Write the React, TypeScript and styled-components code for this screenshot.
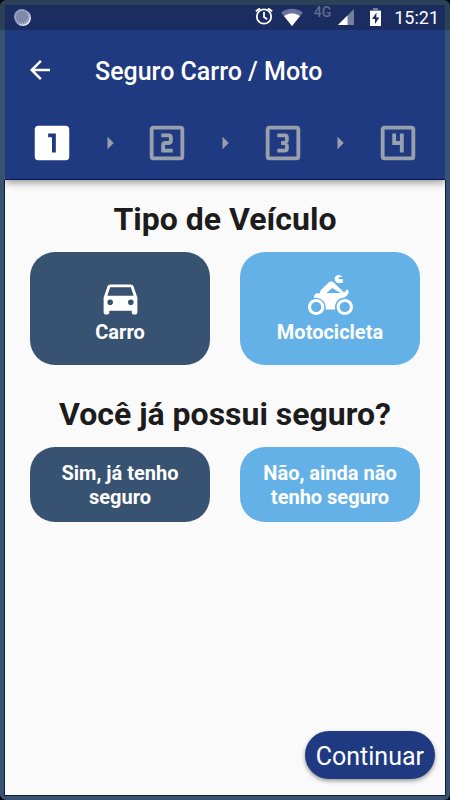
import React, { useState } from 'react';
import styled, { createGlobalStyle } from 'styled-components';

const navy = '#203a82';
const slate = '#385272';
const sky = '#64b1e8';

const GlobalStyle = createGlobalStyle`
  *, *::before, *::after { box-sizing: border-box; }
  body { margin: 0; background: #000; font-family: Roboto, sans-serif; }
  button { font-family: inherit; border: 0; cursor: pointer; padding: 0; }
  svg { display: block; flex: none; }
`;

const Frame = styled.div`
  min-height: 100vh;
  display: flex;
  flex-direction: column;
  padding: 5px;
  border-radius: 6px;
  background: linear-gradient(#2b4158 30px, ${slate} 30px);
`;

const Screen = styled.div`
  flex: 1;
  display: flex;
  flex-direction: column;
  background: #fafafa;
`;

const StatusBar = styled.div`
  height: 25px;
  display: flex;
  align-items: center;
  justify-content: space-between;
  padding: 0 6px 0 8px;
  background: #1b2c60;
  color: #fff;
`;

const StatusGroup = styled.div`
  display: flex;
  align-items: center;
`;

const StatusIcon = styled.svg<{ $gap: number }>`
  margin-right: ${p => p.$gap}px;
`;

const Network = styled.span`
  align-self: flex-start;
  margin-right: 7px;
  color: #5f6b90;
  font-size: 14px;
  font-weight: 500;
  line-height: 12px;
`;

const Clock = styled.time`
  font-size: 18px;
  line-height: 24px;
`;

const Header = styled.header`
  height: 150px;
  background: ${navy};
  border-bottom: 1px solid #0c1552;
  box-shadow: 0 2px 8px rgba(0, 0, 0, 0.45);
  clip-path: inset(0 0 -16px 0);
`;

const TitleRow = styled.div`
  height: 80px;
  display: flex;
  align-items: center;
  gap: 40px;
  padding-left: 20px;
`;

const BackButton = styled.button`
  width: 30px;
  height: 30px;
  background: none;
`;

const Title = styled.h1`
  margin: 0;
  padding-top: 3px;
  color: #fff;
  font-size: 25px;
  font-weight: 500;
  line-height: 30px;
`;

const Steps = styled.ol`
  height: 66px;
  display: flex;
  align-items: center;
  justify-content: space-between;
  margin: 0;
  padding: 0 24px;
  list-style: none;
`;

const Step = styled.li<{ $active?: boolean }>`
  color: ${p => (p.$active ? '#fff' : '#98a0ac')};
`;

const Content = styled.main`
  flex: 1;
  display: flex;
  flex-direction: column;
  padding: 20px 10px 16px 25px;
  box-shadow: 0 0 0 1px #0b1c3c;
  clip-path: inset(0 -1px -1px -1px);
`;

const Section = styled.section`
  padding-right: 15px;
  margin-bottom: 30px;
`;

const Heading = styled.h2`
  margin: 0 0 14px;
  color: #1c1c1c;
  font-size: 32px;
  font-weight: 700;
  line-height: 38px;
  text-align: center;
`;

const Options = styled.div`
  display: grid;
  grid-template-columns: 1fr 1fr;
  gap: 30px;
`;

const Option = styled.button<{ $selected: boolean; $tall?: boolean }>`
  display: flex;
  flex-direction: column;
  align-items: center;
  justify-content: center;
  min-height: ${p => (p.$tall ? 113 : 75)}px;
  padding: 13px 20px 12px;
  border-radius: 25px;
  background: ${p => (p.$selected ? slate : sky)};
  color: #fff;
  font-size: 20px;
  font-weight: 700;
  line-height: 24px;
`;

const ContinueButton = styled.button`
  align-self: flex-end;
  margin-top: auto;
  height: 48px;
  padding: 3px 11px 0;
  border-radius: 24px;
  background: ${navy};
  box-shadow: 0 2px 4px rgba(0, 0, 0, 0.4);
  color: #fff;
  font-size: 25px;
  font-weight: 400;
  line-height: 30px;
`;

const stepPaths = [
  'M14 17H12V9H10V7H14M19 3H5A2 2 0 0 0 3 5V19A2 2 0 0 0 5 21H19A2 2 0 0 0 21 19V5A2 2 0 0 0 19 3Z',
  'M15 15H11V13H13A2 2 0 0 0 15 11V9A2 2 0 0 0 13 7H9V9H13V11H11A2 2 0 0 0 9 13V17H15Z',
  'M15 15V13.5A1.5 1.5 0 0 0 13.5 12A1.5 1.5 0 0 0 15 10.5V9A2 2 0 0 0 13 7H9V9H13V11H11V13H13V15H9V17H13A2 2 0 0 0 15 15Z',
  'M13 17H15V7H13V11H11V7H9V13H13Z',
];
const boxPath =
  'M19 19H5V5H19M19 3H5A2 2 0 0 0 3 5V19A2 2 0 0 0 5 21H19A2 2 0 0 0 21 19V5A2 2 0 0 0 19 3Z';
const carPath =
  'M5 11L6.5 6.5H17.5L19 11M17.5 16A1.5 1.5 0 0 1 16 14.5A1.5 1.5 0 0 1 17.5 13A1.5 1.5 0 0 1 19 14.5A1.5 1.5 0 0 1 17.5 16M6.5 16A1.5 1.5 0 0 1 5 14.5A1.5 1.5 0 0 1 6.5 13A1.5 1.5 0 0 1 8 14.5A1.5 1.5 0 0 1 6.5 16M18.92 6C18.72 5.42 18.16 5 17.5 5H6.5C5.84 5 5.28 5.42 5.08 6L3 12V20A1 1 0 0 0 4 21H5A1 1 0 0 0 6 20V19H18V20A1 1 0 0 0 19 21H20A1 1 0 0 0 21 20V12L18.92 6Z';
const motorbikePath =
  'M16.36 4.27H18.55V2.13H16.36V1.07H18.22C17.89.43 17.13 0 16.36 0C15.16 0 14.18.96 14.18 2.13C14.18 3.31 15.16 4.27 16.36 4.27M10.04 9.39L13 6.93L17.45 9.6H10.25M19.53 12.05L21.05 10.56C21.93 9.71 21.93 8.43 21.05 7.57L19.2 9.39L13.96 4.27C13.64 3.73 13 3.41 12.33 3.41C11.78 3.41 11.35 3.63 11 3.95L7 7.89C6.65 8.21 6.44 8.64 6.44 9.17V9.71H5.13C4.04 9.71 3.16 10.67 3.16 11.84V12.27C3.5 12.16 3.93 12.16 4.25 12.16C7.09 12.16 9.5 14.4 9.5 17.28C9.5 17.6 9.5 18.03 9.38 18.35H14.5C14.4 18.03 14.4 17.6 14.4 17.28C14.4 14.29 16.69 12.05 19.53 12.05M4.36 19.73C2.84 19.73 1.64 18.56 1.64 17.07C1.64 15.57 2.84 14.4 4.36 14.4C5.89 14.4 7.09 15.57 7.09 17.07C7.09 18.56 5.89 19.73 4.36 19.73M4.36 12.8C1.96 12.8 0 14.72 0 17.07C0 19.41 1.96 21.33 4.36 21.33C6.76 21.33 8.73 19.41 8.73 17.07C8.73 14.72 6.76 12.8 4.36 12.8M19.64 19.73C18.11 19.73 16.91 18.56 16.91 17.07C16.91 15.57 18.11 14.4 19.64 14.4C21.16 14.4 22.36 15.57 22.36 17.07C22.36 18.56 21.16 19.73 19.64 19.73M19.64 12.8C17.24 12.8 15.27 14.72 15.27 17.07C15.27 19.41 17.24 21.33 19.64 21.33C22.04 21.33 24 19.41 24 17.07C24 14.72 22.04 12.8 19.64 12.8Z';

function Glyph({ d, size }: { d: string; size: number }) {
  return (
    <svg width={size} height={size} viewBox="0 0 24 24" fill="currentColor" fillRule="evenodd" aria-hidden="true">
      <path d={d} />
    </svg>
  );
}

function PhoneStatus() {
  return (
    <StatusBar>
      <StatusIcon $gap={0} width="20" height="20" viewBox="0 0 20 20">
        <circle cx="10" cy="10" r="8" fill="#dde2ee" />
        <circle cx="8.8" cy="8.8" r="7.8" fill="#7f88ad" />
        <circle cx="8.8" cy="8.8" r="6.6" fill="none" stroke="#b4bbd2" strokeWidth="1.6" strokeDasharray="1 1.3" />
      </StatusIcon>
      <StatusGroup>
        <StatusIcon $gap={8} width="18" height="19" viewBox="0 0 18 19" fill="none" stroke="#fff" strokeWidth="1.8">
          <circle cx="9" cy="8.5" r="7.2" />
          <path d="M9 4v5l3.2 2.2M.8 3.2L5 .4M17.2 3.2L13 .4" />
        </StatusIcon>
        <StatusIcon $gap={11} width="22" height="20" viewBox="0 0 22 20">
          <path d="M0 4.5Q11-3 22 4.5L11 18z" fill="#68749a" />
          <path d="M3 8Q11 2.5 19 8L11 18z" fill="#fff" />
        </StatusIcon>
        <Network>4G</Network>
        <StatusIcon $gap={16} width="16" height="18" viewBox="0 0 16 18">
          <path d="M16 0v16H0z" fill="#75809f" />
          <path d="M9.5 6.5V16H0z" fill="#fff" />
        </StatusIcon>
        <StatusIcon $gap={13} width="11" height="20" viewBox="0 0 11 20">
          <path d="M3 0h5v2h3v4H0V2h3z" fill="#75809f" />
          <path d="M0 3h11v15H0z" fill="#fff" />
          <path d="M6.5 4.5L2 11h3v5l4.3-6.6h-3z" fill="#1b2c60" />
        </StatusIcon>
        <Clock>15:21</Clock>
      </StatusGroup>
    </StatusBar>
  );
}

export default function App() {
  const [vehicle, setVehicle] = useState('carro');
  const [insured, setInsured] = useState(true);

  return (
    <>
      <GlobalStyle />
      <Frame>
        <Screen>
          <PhoneStatus />
          <Header>
            <TitleRow>
              <BackButton aria-label="Voltar">
                <svg width="30" height="30" viewBox="0 0 24 24" fill="#fff">
                  <path d="M20 11H7.83l5.59-5.59L12 4l-8 8 8 8 1.41-1.41L7.83 13H20z" />
                </svg>
              </BackButton>
              <Title>Seguro Carro / Moto</Title>
            </TitleRow>
            <Steps>
              {stepPaths.map((path, i) => (
                <React.Fragment key={path}>
                  {i > 0 && (
                    <Step aria-hidden="true">
                      <Glyph d="M10 17l5-5-5-5z" size={30} />
                    </Step>
                  )}
                  <Step $active={i === 0} aria-label={`Etapa ${i + 1}`} aria-current={i === 0 ? 'step' : undefined}>
                    <Glyph d={i === 0 ? path : path + boxPath} size={46} />
                  </Step>
                </React.Fragment>
              ))}
            </Steps>
          </Header>
          <Content>
            <Section>
              <Heading>Tipo de Veículo</Heading>
              <Options>
                <Option $tall $selected={vehicle === 'carro'} aria-pressed={vehicle === 'carro'} onClick={() => setVehicle('carro')}>
                  <Glyph d={carPath} size={45} />
                  Carro
                </Option>
                <Option $tall $selected={vehicle === 'moto'} aria-pressed={vehicle === 'moto'} onClick={() => setVehicle('moto')}>
                  <Glyph d={motorbikePath} size={45} />
                  Motocicleta
                </Option>
              </Options>
            </Section>
            <Section>
              <Heading>Você já possui seguro?</Heading>
              <Options>
                <Option $selected={insured} aria-pressed={insured} onClick={() => setInsured(true)}>
                  Sim, já tenho seguro
                </Option>
                <Option $selected={!insured} aria-pressed={!insured} onClick={() => setInsured(false)}>
                  Não, ainda não tenho seguro
                </Option>
              </Options>
            </Section>
            <ContinueButton>Continuar</ContinueButton>
          </Content>
        </Screen>
      </Frame>
    </>
  );
}
